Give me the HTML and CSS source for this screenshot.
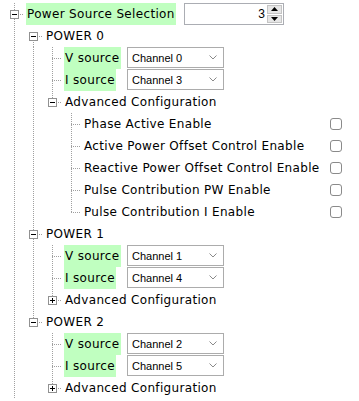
FILE: index.html
```html
<html>
  <head>
    <title>Power Source Selection</title>
    <link rel="stylesheet" href="styles.css">
  </head>
  <body>
    <div class="tree">
      <div class="row">
        <div class="cell tee"><svg class="box" width="9" height="9"><rect x="0.5" y="0.5" width="8" height="8"/><line x1="2" y1="4.5" x2="7" y2="4.5"/></svg></div>
        <div class="name root-name"><span class="label hl">Power Source Selection</span></div>
        <div class="spin">
          <div class="spin-val">3</div>
          <div class="spin-btns">
            <div class="spin-btn"><svg width="7" height="4"><polygon points="0,4 7,4 3.5,0"/></svg></div>
            <div class="spin-btn"><svg width="7" height="4"><polygon points="0,0 7,0 3.5,4"/></svg></div>
          </div>
        </div>
      </div>

      <div class="row">
        <div class="cell pipe"></div>
        <div class="cell top"><svg class="box" width="9" height="9"><rect x="0.5" y="0.5" width="8" height="8"/><line x1="2" y1="4.5" x2="7" y2="4.5"/></svg></div>
        <span class="label">POWER 0</span>
      </div>
      <div class="row">
        <div class="cell pipe"></div><div class="cell pipe"></div><div class="cell tee"></div>
        <div class="name src-name"><span class="label hl">V source</span></div>
        <div class="sel">Channel 0<svg class="chev" width="8" height="5"><polyline points="0.5,0.5 4,4 7.5,0.5"/></svg></div>
      </div>
      <div class="row">
        <div class="cell pipe"></div><div class="cell pipe"></div><div class="cell tee"></div>
        <div class="name src-name"><span class="label hl">I source</span></div>
        <div class="sel">Channel 3<svg class="chev" width="8" height="5"><polyline points="0.5,0.5 4,4 7.5,0.5"/></svg></div>
      </div>
      <div class="row">
        <div class="cell pipe"></div><div class="cell pipe"></div>
        <div class="cell ell"><svg class="box" width="9" height="9"><rect x="0.5" y="0.5" width="8" height="8"/><line x1="2" y1="4.5" x2="7" y2="4.5"/></svg></div>
        <span class="label">Advanced Configuration</span>
      </div>
      <div class="row">
        <div class="cell pipe"></div><div class="cell pipe"></div><div class="cell"></div><div class="cell tee"></div>
        <span class="label">Phase Active Enable</span><div class="check"></div>
      </div>
      <div class="row">
        <div class="cell pipe"></div><div class="cell pipe"></div><div class="cell"></div><div class="cell tee"></div>
        <span class="label">Active Power Offset Control Enable</span><div class="check"></div>
      </div>
      <div class="row">
        <div class="cell pipe"></div><div class="cell pipe"></div><div class="cell"></div><div class="cell tee"></div>
        <span class="label">Reactive Power Offset Control Enable</span><div class="check"></div>
      </div>
      <div class="row">
        <div class="cell pipe"></div><div class="cell pipe"></div><div class="cell"></div><div class="cell tee"></div>
        <span class="label">Pulse Contribution PW Enable</span><div class="check"></div>
      </div>
      <div class="row">
        <div class="cell pipe"></div><div class="cell pipe"></div><div class="cell"></div><div class="cell ell"></div>
        <span class="label">Pulse Contribution I Enable</span><div class="check"></div>
      </div>

      <div class="row">
        <div class="cell pipe"></div>
        <div class="cell tee"><svg class="box" width="9" height="9"><rect x="0.5" y="0.5" width="8" height="8"/><line x1="2" y1="4.5" x2="7" y2="4.5"/></svg></div>
        <span class="label">POWER 1</span>
      </div>
      <div class="row">
        <div class="cell pipe"></div><div class="cell pipe"></div><div class="cell tee"></div>
        <div class="name src-name"><span class="label hl">V source</span></div>
        <div class="sel">Channel 1<svg class="chev" width="8" height="5"><polyline points="0.5,0.5 4,4 7.5,0.5"/></svg></div>
      </div>
      <div class="row">
        <div class="cell pipe"></div><div class="cell pipe"></div><div class="cell tee"></div>
        <div class="name src-name"><span class="label hl">I source</span></div>
        <div class="sel">Channel 4<svg class="chev" width="8" height="5"><polyline points="0.5,0.5 4,4 7.5,0.5"/></svg></div>
      </div>
      <div class="row">
        <div class="cell pipe"></div><div class="cell pipe"></div>
        <div class="cell ell"><svg class="box" width="9" height="9"><rect x="0.5" y="0.5" width="8" height="8"/><line x1="2" y1="4.5" x2="7" y2="4.5"/><line x1="4.5" y1="2" x2="4.5" y2="7"/></svg></div>
        <span class="label">Advanced Configuration</span>
      </div>

      <div class="row">
        <div class="cell pipe"></div>
        <div class="cell ell"><svg class="box" width="9" height="9"><rect x="0.5" y="0.5" width="8" height="8"/><line x1="2" y1="4.5" x2="7" y2="4.5"/></svg></div>
        <span class="label">POWER 2</span>
      </div>
      <div class="row">
        <div class="cell pipe"></div><div class="cell"></div><div class="cell tee"></div>
        <div class="name src-name"><span class="label hl">V source</span></div>
        <div class="sel">Channel 2<svg class="chev" width="8" height="5"><polyline points="0.5,0.5 4,4 7.5,0.5"/></svg></div>
      </div>
      <div class="row">
        <div class="cell pipe"></div><div class="cell"></div><div class="cell tee"></div>
        <div class="name src-name"><span class="label hl">I source</span></div>
        <div class="sel">Channel 5<svg class="chev" width="8" height="5"><polyline points="0.5,0.5 4,4 7.5,0.5"/></svg></div>
      </div>
      <div class="row">
        <div class="cell pipe"></div><div class="cell"></div>
        <div class="cell ell"><svg class="box" width="9" height="9"><rect x="0.5" y="0.5" width="8" height="8"/><line x1="2" y1="4.5" x2="7" y2="4.5"/><line x1="4.5" y1="2" x2="4.5" y2="7"/></svg></div>
        <span class="label">Advanced Configuration</span>
      </div>
    </div>
  </body>
</html>
```

FILE: styles.css
```css
* {
  box-sizing: border-box;
  margin: 0;
  padding: 0;
}
body {
  background-color: #fff;
  color: #000;
  font-family: "DejaVu Sans", Verdana, sans-serif;
  font-size: 12px;
  overflow: hidden;
}
.tree {
  --dotv: repeating-linear-gradient(to bottom, #a0a0a0 0 1px, transparent 1px 2px);
  --doth: repeating-linear-gradient(to right, #a0a0a0 0 1px, transparent 1px 2px);
  padding: 3px 0 0 5px;
}
.row {
  display: flex;
  align-items: center;
  height: 22px;
}
.cell {
  flex: none;
  width: 19px;
  height: 22px;
  display: flex;
  align-items: center;
  background-repeat: no-repeat;
}
.pipe {
  background-image: var(--dotv);
  background-size: 1px 22px;
  background-position: 9px 0;
}
.tee {
  background-image: var(--dotv), var(--doth);
  background-size: 1px 22px, 10px 1px;
  background-position: 9px 0, 9px 11px;
}
.ell {
  background-image: var(--dotv), var(--doth);
  background-size: 1px 12px, 10px 1px;
  background-position: 9px 0, 9px 11px;
}
.top {
  background-image: var(--dotv), var(--doth);
  background-size: 1px 11px, 10px 1px;
  background-position: 9px 11px, 9px 11px;
}
.box {
  display: block;
  margin-left: 5px;
}
.box rect {
  fill: #fff;
  stroke: #919191;
}
.box line {
  stroke: #000;
  stroke-width: 1;
}
.label {
  margin-left: 2px;
  padding: 0 1px;
  height: 22px;
  line-height: 22px;
  letter-spacing: 0.33px;
  white-space: nowrap;
}
.hl {
  background-color: #c0ffc0;
}
.name {
  flex: none;
  height: 22px;
  display: flex;
}
.root-name {
  width: 160px;
}
.src-name {
  width: 65px;
}
.spin {
  width: 100px;
  height: 22px;
  border: 1px solid #abadb3;
  display: flex;
  background: #fff;
}
.spin-val {
  flex: 1;
  text-align: right;
  padding-right: 2px;
  line-height: 20px;
  font-family: "Liberation Sans", Arial, sans-serif;
  font-size: 12px;
}
.spin-btns {
  width: 16px;
  display: flex;
  flex-direction: column;
  gap: 1px;
  padding: 1px 1px 1px 0;
}
.spin-btn {
  flex: 1;
  background: #e6e6e6;
  border: 1px solid #c4c4c4;
  display: flex;
  align-items: center;
  justify-content: center;
}
.spin-btn svg {
  display: block;
  fill: #000;
}
.sel {
  align-self: flex-start;
  width: 97px;
  height: 21px;
  border: 1px solid #acacac;
  background: #fff;
  display: flex;
  align-items: center;
  padding-left: 4px;
  font-family: "Liberation Sans", Arial, sans-serif;
  font-size: 11px;
}
.chev {
  display: block;
  margin-left: auto;
  margin-right: 6px;
  fill: none;
  stroke: #8a8a8a;
}
.check {
  margin-left: auto;
  margin-right: 17px;
  width: 12px;
  height: 12px;
  border: 1px solid #8a8a8a;
  border-radius: 3px;
  background: #fff;
}
```
